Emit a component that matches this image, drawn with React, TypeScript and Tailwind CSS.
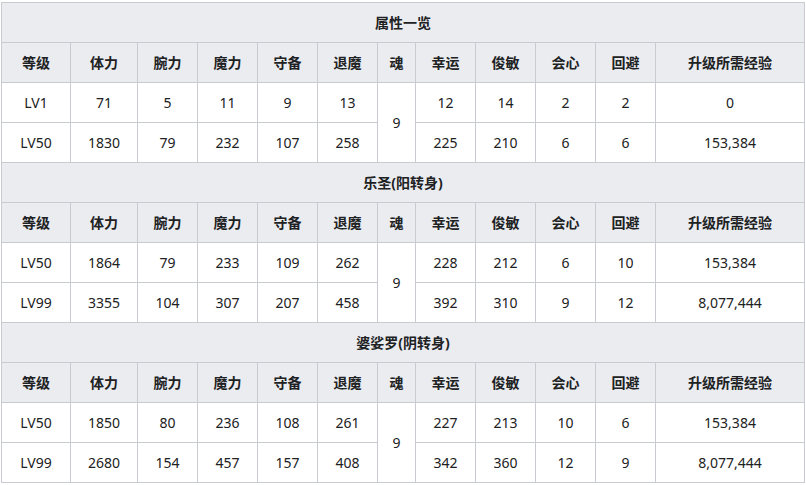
const HEADERS = ['等级', '体力', '腕力', '魔力', '守备', '退魔', '魂', '幸运', '俊敏', '会心', '回避', '升级所需经验'];
const WIDTHS = [69, 67, 60, 60, 60, 60, 38, 60, 60, 60, 60, 149];

type Section = {
  title: string;
  soul: string;
  rows: [string[], string[]];
};

const SECTIONS: Section[] = [
  {
    title: '属性一览',
    soul: '9',
    rows: [
      ['LV1', '71', '5', '11', '9', '13', '12', '14', '2', '2', '0'],
      ['LV50', '1830', '79', '232', '107', '258', '225', '210', '6', '6', '153,384'],
    ],
  },
  {
    title: '乐圣(阳转身)',
    soul: '9',
    rows: [
      ['LV50', '1864', '79', '233', '109', '262', '228', '212', '6', '10', '153,384'],
      ['LV99', '3355', '104', '307', '207', '458', '392', '310', '9', '12', '8,077,444'],
    ],
  },
  {
    title: '婆娑罗(阴转身)',
    soul: '9',
    rows: [
      ['LV50', '1850', '80', '236', '108', '261', '227', '213', '10', '6', '153,384'],
      ['LV99', '2680', '154', '457', '157', '408', '342', '360', '12', '9', '8,077,444'],
    ],
  },
];

const cell = 'border border-[#c8ccd1] text-center align-middle p-0';
const head = `${cell} bg-[#eaecf0] font-bold`;

export default function App() {
  return (
    <div
      className="pl-[1px] pt-[2px] bg-white text-[14px] text-[#202122]"
      style={{ fontFamily: '"Noto Sans", "Noto Sans CJK SC", sans-serif' }}
    >
      <table className="table-fixed border-collapse w-[803px]">
        <colgroup>
          {WIDTHS.map((w, i) => (
            <col key={i} style={{ width: w }} />
          ))}
        </colgroup>
        <tbody>
          {SECTIONS.map((s) => (
            <SectionRows key={s.title} section={s} />
          ))}
        </tbody>
      </table>
    </div>
  );
}

function SectionRows({ section }: { section: Section }) {
  const [first, second] = section.rows;
  return (
    <>
      <tr className="h-10">
        <th colSpan={12} className={head}>
          {section.title}
        </th>
      </tr>
      <tr className="h-10">
        {HEADERS.map((h) => (
          <th key={h} className={head}>
            {h}
          </th>
        ))}
      </tr>
      <tr className="h-10">
        {first.slice(0, 6).map((v, i) => (
          <td key={i} className={cell}>
            {v}
          </td>
        ))}
        <td rowSpan={2} className={cell}>
          {section.soul}
        </td>
        {first.slice(6).map((v, i) => (
          <td key={i + 6} className={cell}>
            {v}
          </td>
        ))}
      </tr>
      <tr className="h-10">
        {second.map((v, i) => (
          <td key={i} className={cell}>
            {v}
          </td>
        ))}
      </tr>
    </>
  );
}
